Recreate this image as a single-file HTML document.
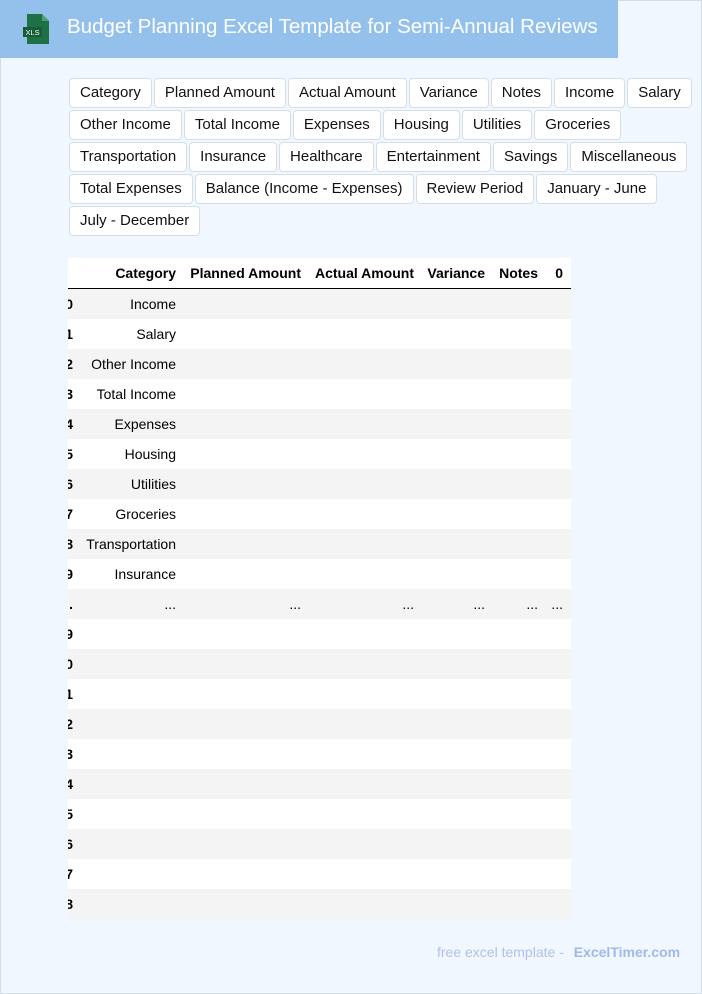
<!DOCTYPE html>
<html><head><meta charset="utf-8"><style>
*{margin:0;padding:0;box-sizing:border-box}
body{width:702px;height:994px;background:#f0f7ff;font-family:"Liberation Sans",Arial,sans-serif;position:relative;overflow:hidden;border:1px solid #d5dde8}
.hdr{position:absolute;left:-1px;top:-1px;width:618px;height:58px;background:#93c1eb}
.hdr h1{position:absolute;left:67px;top:15px;font-size:20.5px;font-weight:normal;color:#fff;white-space:nowrap}
.tags{position:absolute;left:68px;top:77px;width:630px}
.tag{display:inline-block;height:30px;line-height:28px;padding:0 10px;margin:0 2px 2px 0;border:1px solid #d6dde6;border-radius:4px;background:#fff;font-size:15px;color:#111;float:left}
.tbl{position:absolute;left:67px;top:257px;width:503px;height:662px;overflow:hidden}
.row{position:absolute;left:0;width:503px;height:30px;font-size:14px;color:#000}
.row span{position:absolute;top:7px;text-align:right;white-space:nowrap}
.g{background:#f4f4f4}.w{background:#fff}
.h span{font-weight:bold}
.idx{right:498px;font-weight:bold}
.foot{position:absolute;left:436px;top:943px;font-size:14px;color:#b0c0e8}
.foot b{color:#a0b8ec;margin-left:6px}
</style></head><body>
<div class="hdr">
<svg style="position:absolute;left:22px;top:14px" width="28" height="30" viewBox="0 0 28 30"><path d="M5 0h15l7 7v23H5z" fill="#1e7145"/><path d="M20 0v7h7z" fill="#4aa172"/><rect x="1" y="13" width="19" height="10" fill="#155c37"/><text x="3.5" y="21" font-size="7.5" fill="#fff" font-family="Liberation Sans">XLS</text></svg>
<h1>Budget Planning Excel Template for Semi-Annual Reviews</h1></div>
<div class="tags">
<span class="tag">Category</span><span class="tag">Planned Amount</span><span class="tag">Actual Amount</span><span class="tag">Variance</span><span class="tag">Notes</span><span class="tag">Income</span><span class="tag">Salary</span>
<span class="tag">Other Income</span><span class="tag">Total Income</span><span class="tag">Expenses</span><span class="tag">Housing</span><span class="tag">Utilities</span><span class="tag">Groceries</span>
<span class="tag">Transportation</span><span class="tag">Insurance</span><span class="tag">Healthcare</span><span class="tag">Entertainment</span><span class="tag">Savings</span><span class="tag">Miscellaneous</span>
<span class="tag">Total Expenses</span><span class="tag">Balance (Income - Expenses)</span><span class="tag">Review Period</span><span class="tag">January - June</span>
<span class="tag">July - December</span>
</div>
<div class="tbl">
<div class="row w h" style="top:0;height:31px;border-bottom:1px solid #000"><span style="right:395px">Category</span><span style="right:270px">Planned Amount</span><span style="right:157px">Actual Amount</span><span style="right:86px">Variance</span><span style="right:33px">Notes</span><span style="right:8px">0</span></div>
<div class="row g" style="top:31px"><span class="idx">0</span><span style="right:395px">Income</span></div>
<div class="row w" style="top:61px"><span class="idx">1</span><span style="right:395px">Salary</span></div>
<div class="row g" style="top:91px"><span class="idx">2</span><span style="right:395px">Other Income</span></div>
<div class="row w" style="top:121px"><span class="idx">3</span><span style="right:395px">Total Income</span></div>
<div class="row g" style="top:151px"><span class="idx">4</span><span style="right:395px">Expenses</span></div>
<div class="row w" style="top:181px"><span class="idx">5</span><span style="right:395px">Housing</span></div>
<div class="row g" style="top:211px"><span class="idx">6</span><span style="right:395px">Utilities</span></div>
<div class="row w" style="top:241px"><span class="idx">7</span><span style="right:395px">Groceries</span></div>
<div class="row g" style="top:271px"><span class="idx">8</span><span style="right:395px">Transportation</span></div>
<div class="row w" style="top:301px"><span class="idx">9</span><span style="right:395px">Insurance</span></div>
<div class="row g" style="top:331px"><span class="idx">.</span><span style="right:395px">...</span><span style="right:270px">...</span><span style="right:157px">...</span><span style="right:86px">...</span><span style="right:33px">...</span><span style="right:8px">...</span></div>
<div class="row w" style="top:361px"><span class="idx">9</span></div>
<div class="row g" style="top:391px"><span class="idx">0</span></div>
<div class="row w" style="top:421px"><span class="idx">1</span></div>
<div class="row g" style="top:451px"><span class="idx">2</span></div>
<div class="row w" style="top:481px"><span class="idx">3</span></div>
<div class="row g" style="top:511px"><span class="idx">4</span></div>
<div class="row w" style="top:541px"><span class="idx">5</span></div>
<div class="row g" style="top:571px"><span class="idx">6</span></div>
<div class="row w" style="top:601px"><span class="idx">7</span></div>
<div class="row g" style="top:631px"><span class="idx">8</span></div>
</div>
<div class="foot">free excel template - <b>ExcelTimer.com</b></div>
</body></html>
